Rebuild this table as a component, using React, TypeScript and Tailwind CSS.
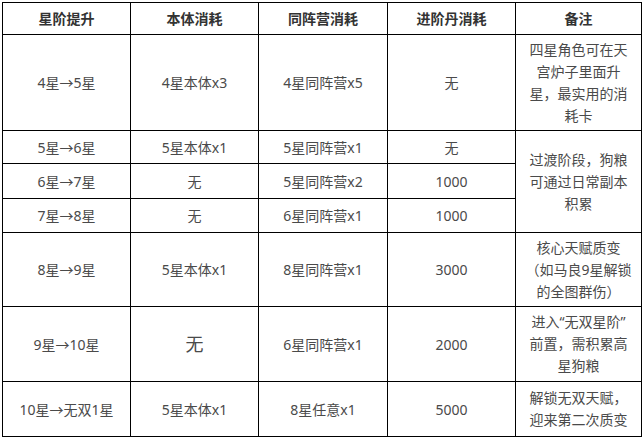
import React from "react";

type Row = {
  cells: { text: string; big?: boolean }[];
  remark?: string[];
  span?: number;
};

const rows: Row[] = [
  {
    cells: [{ text: "4星→5星" }, { text: "4星本体x3" }, { text: "4星同阵营x5" }, { text: "无" }],
    remark: ["四星角色可在天", "宫炉子里面升", "星，最实用的消", "耗卡"],
  },
  {
    cells: [{ text: "5星→6星" }, { text: "5星本体x1" }, { text: "5星同阵营x1" }, { text: "无" }],
    remark: ["过渡阶段，狗粮", "可通过日常副本", "积累"],
    span: 3,
  },
  {
    cells: [{ text: "6星→7星" }, { text: "无" }, { text: "5星同阵营x2" }, { text: "1000" }],
  },
  {
    cells: [{ text: "7星→8星" }, { text: "无" }, { text: "6星同阵营x1" }, { text: "1000" }],
  },
  {
    cells: [{ text: "8星→9星" }, { text: "5星本体x1" }, { text: "8星同阵营x1" }, { text: "3000" }],
    remark: ["核心天赋质变", "（如马良9星解锁", "的全图群伤）"],
  },
  {
    cells: [{ text: "9星→10星" }, { text: "无", big: true }, { text: "6星同阵营x1" }, { text: "2000" }],
    remark: ["进入“无双星阶”", "前置，需积累高", "星狗粮"],
  },
  {
    cells: [{ text: "10星→无双1星" }, { text: "5星本体x1" }, { text: "8星任意x1" }, { text: "5000" }],
    remark: ["解锁无双天赋，", "迎来第二次质变"],
  },
];

const headers = ["星阶提升", "本体消耗", "同阵营消耗", "进阶丹消耗", "备注"];

export default function App() {
  return (
    <div className="w-[643px] h-[437px] overflow-hidden bg-white p-[2px] font-['Noto_Sans','Noto_Sans_CJK_SC',sans-serif]">
      <div className="relative grid w-[640px] grid-cols-[127px_127px_128px_127px_125px] grid-rows-[31px_95px_32px_34px_33px_73px_74px_54px] gap-px border border-black bg-black">
        {headers.map((h) => (
          <div
            key={h}
            className="flex items-center justify-center bg-white text-[14px] font-bold text-[#333333]"
          >
            {h}
          </div>
        ))}
        {rows.map((r, i) => (
          <React.Fragment key={i}>
            {r.cells.map((c, j) => (
              <div
                key={j}
                className={
                  c.big
                    ? "flex items-center justify-center bg-white text-[18px] text-[#4a4a4a]"
                    : "flex items-center justify-center bg-white text-[14px] text-[#4a4a4a]"
                }
              >
                {c.text}
              </div>
            ))}
            {r.remark && (
              <div
                className={
                  r.span === 3
                    ? "row-span-3 flex flex-col items-center justify-center bg-white px-1 text-[14px] leading-[22px] text-[#4a4a4a]"
                    : "flex flex-col items-center justify-center bg-white px-1 text-[14px] leading-[22px] text-[#4a4a4a]"
                }
              >
                {r.remark.map((l, k) => (
                  <span key={k} className="whitespace-nowrap">
                    {l}
                  </span>
                ))}
              </div>
            )}
          </React.Fragment>
        ))}
      </div>
    </div>
  );
}
